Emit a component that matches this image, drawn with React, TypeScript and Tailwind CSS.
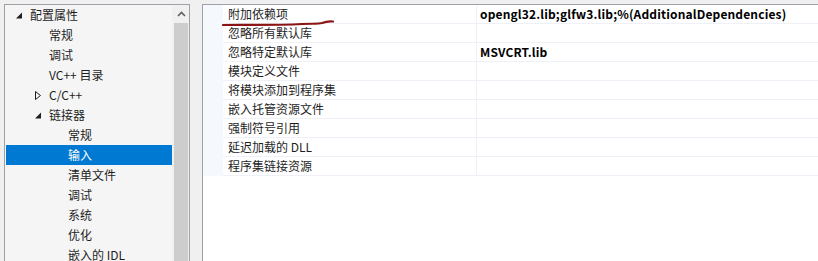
import React from "react";

const font = { fontFamily: '"Noto Sans CJK SC", "Noto Sans", sans-serif' };

type TreeItem = { label: string; level: number; arrow?: "open" | "closed"; selected?: boolean };

const tree: TreeItem[] = [
  { label: "配置属性", level: 0, arrow: "open" },
  { label: "常规", level: 1 },
  { label: "调试", level: 1 },
  { label: "VC++ 目录", level: 1 },
  { label: "C/C++", level: 1, arrow: "closed" },
  { label: "链接器", level: 1, arrow: "open" },
  { label: "常规", level: 2 },
  { label: "输入", level: 2, selected: true },
  { label: "清单文件", level: 2 },
  { label: "调试", level: 2 },
  { label: "系统", level: 2 },
  { label: "优化", level: 2 },
  { label: "嵌入的 IDL", level: 2 },
];

const rows: { name: string; value?: string }[] = [
  { name: "附加依赖项", value: "opengl32.lib;glfw3.lib;%(AdditionalDependencies)" },
  { name: "忽略所有默认库" },
  { name: "忽略特定默认库", value: "MSVCRT.lib" },
  { name: "模块定义文件" },
  { name: "将模块添加到程序集" },
  { name: "嵌入托管资源文件" },
  { name: "强制符号引用" },
  { name: "延迟加载的 DLL" },
  { name: "程序集链接资源" },
];

function Arrow({ kind, selected }: { kind: "open" | "closed"; selected?: boolean }) {
  const c = selected ? "#fff" : "#1e1e1e";
  if (kind === "open")
    return (
      <svg width="7" height="7" viewBox="0 0 7 7">
        <polygon points="6,0.5 6,6.5 0,6.5" fill={c} />
      </svg>
    );
  return (
    <svg width="6" height="9" viewBox="0 0 6 9">
      <polygon points="0.5,0.5 5.5,4.5 0.5,8.5" fill="none" stroke={c} strokeWidth="1" />
    </svg>
  );
}

export default function App() {
  return (
    <div className="w-[818px] h-[261px] bg-[#f0f0f0] overflow-hidden flex pt-[4px] pl-[4px] text-[12px] text-[#1e1e1e]" style={font}>
      {/* Tree panel */}
      <div className="w-[186px] h-[300px] border border-[#a0a0a8] bg-[#f5f5f5] flex shrink-0">
        <div className="flex-1 flex flex-col pl-[1px]">
          {tree.map((t, i) => (
            <div
              key={i}
              className={`h-[20px] flex items-center ${t.selected ? "bg-[#0079d2] text-white" : ""}`}
            >
              <div
                className={`flex items-center justify-center w-[10px] shrink-0 ${
                  t.level === 0 ? "ml-[8px]" : t.level === 1 ? "ml-[27px]" : "ml-[46px]"
                }`}
              >
                {t.arrow && <Arrow kind={t.arrow} selected={t.selected} />}
              </div>
              <span className="ml-[6px] leading-none whitespace-nowrap">{t.label}</span>
            </div>
          ))}
        </div>
        <div className="w-[17px] flex flex-col bg-[#f0f0f0] border-l border-[#f0f0f0]">
          <div className="h-[18px] flex items-center justify-center">
            <svg width="9" height="6" viewBox="0 0 9 6">
              <polyline points="1,5 4.5,1.5 8,5" fill="none" stroke="#606060" strokeWidth="1.6" />
            </svg>
          </div>
          <div className="flex-1 bg-[#cdcdcd] mx-[1px]" />
        </div>
      </div>

      {/* Property grid */}
      <div className="ml-[12px] flex-1 h-[300px] border-t border-l border-[#a0a0a8] bg-white">
        <div className="flex flex-col">
          {rows.map((r, i) => (
            <div key={i} className="h-[19px] flex">
              <div className="w-[20px] shrink-0 bg-[#f5f8fc]" />
              <div className="relative w-[254px] shrink-0 border-b border-r border-[#eef2f8] flex items-center pl-[5px]">
                <span className="leading-none whitespace-nowrap">{r.name}</span>
                {i === 0 && (
                  <svg className="absolute left-[-1px] top-[14px]" width="114" height="8" viewBox="0 0 114 8">
                    <path
                      d="M1,6 C20,5.5 50,6.5 80,5 C92,4.5 96,5 100,4 C104,2.5 107,2 111,2.5"
                      fill="none"
                      stroke="#8b1414"
                      strokeWidth="2.2"
                      strokeLinecap="round"
                    />
                  </svg>
                )}
              </div>
              <div className="flex-1 border-b border-[#eef2f8] flex items-center pl-[3px]">
                {r.value && (
                  <span className="font-bold leading-none whitespace-nowrap text-black tracking-[0.15px]">{r.value}</span>
                )}
              </div>
            </div>
          ))}
        </div>
      </div>
    </div>
  );
}
